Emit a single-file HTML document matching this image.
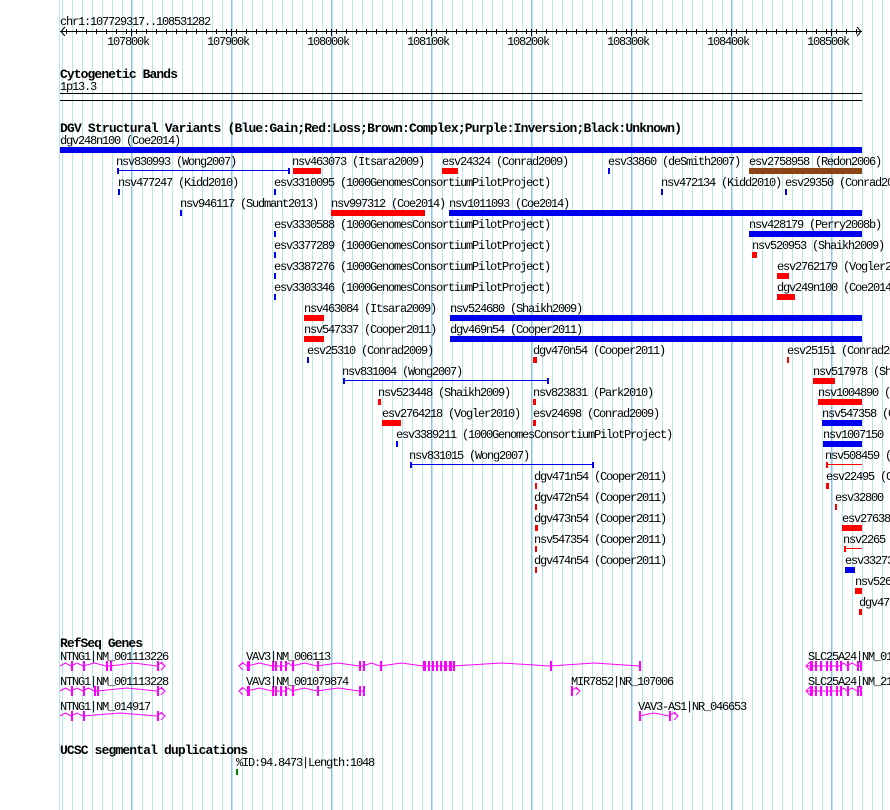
<!DOCTYPE html>
<html><head><meta charset="utf-8"><style>
html,body{margin:0;padding:0;background:#fff;width:890px;height:810px;overflow:hidden}
svg{position:absolute;left:0;top:0}
text{font-family:"Liberation Mono",monospace;font-size:12px;letter-spacing:-1.2px;fill:#000}
.b{font-weight:bold;font-size:13px;letter-spacing:0}
</style></head><body>
<div style="position:absolute;left:60px;top:0;width:830px;height:810px;background:
repeating-linear-gradient(to right,transparent 0 2px,#b2e8f0 2px 3px,transparent 3px 10px);"></div>
<div style="position:absolute;left:59px;top:0;width:1px;height:810px;background:#b2e8f0"></div>
<div style="position:absolute;left:131px;top:0;width:759px;height:810px;background:
repeating-linear-gradient(to right,#8cc6e6 0 1px,transparent 1px 100px);"></div>
<svg id="s" width="890" height="810" xmlns="http://www.w3.org/2000/svg">
<g id="shapes"></g>
<text x="60" y="25">chr1:107729317..108531282</text>
<text x="107" y="45">107800k</text><text x="207" y="45">107900k</text><text x="307" y="45">108000k</text><text x="407" y="45">108100k</text><text x="507" y="45">108200k</text><text x="607" y="45">108300k</text><text x="707" y="45">108400k</text><text x="807" y="45">108500k</text>
<text class="b" x="60" y="78" textLength="118">Cytogenetic Bands</text>
<text x="60" y="90">1p13.3</text>
<text class="b" x="60" y="132" textLength="622">DGV Structural Variants (Blue:Gain;Red:Loss;Brown:Complex;Purple:Inversion;Black:Unknown)</text>
<text x="60" y="144">dgv248n100 (Coe2014)</text>
<text x="116" y="165">nsv830993 (Wong2007)</text>
<text x="292" y="165">nsv463073 (Itsara2009)</text>
<text x="442" y="165">esv24324 (Conrad2009)</text>
<text x="608" y="165">esv33860 (deSmith2007)</text>
<text x="749" y="165">esv2758958 (Redon2006)</text>
<text x="118" y="186">nsv477247 (Kidd2010)</text>
<text x="274" y="186">esv3310095 (1000GenomesConsortiumPilotProject)</text>
<text x="661" y="186">nsv472134 (Kidd2010)</text>
<text x="785" y="186">esv29350 (Conrad2009)</text>
<text x="180" y="207">nsv946117 (Sudmant2013)</text>
<text x="331" y="207">nsv997312 (Coe2014)</text>
<text x="449" y="207">nsv1011093 (Coe2014)</text>
<text x="274" y="228">esv3330588 (1000GenomesConsortiumPilotProject)</text>
<text x="749" y="228">nsv428179 (Perry2008b)</text>
<text x="274" y="249">esv3377289 (1000GenomesConsortiumPilotProject)</text>
<text x="752" y="249">nsv520953 (Shaikh2009)</text>
<text x="274" y="270">esv3387276 (1000GenomesConsortiumPilotProject)</text>
<text x="777" y="270">esv2762179 (Vogler2010)</text>
<text x="274" y="291">esv3303346 (1000GenomesConsortiumPilotProject)</text>
<text x="777" y="291">dgv249n100 (Coe2014)</text>
<text x="304" y="312">nsv463084 (Itsara2009)</text>
<text x="450" y="312">nsv524680 (Shaikh2009)</text>
<text x="304" y="333">nsv547337 (Cooper2011)</text>
<text x="450" y="333">dgv469n54 (Cooper2011)</text>
<text x="307" y="354">esv25310 (Conrad2009)</text>
<text x="533" y="354">dgv470n54 (Cooper2011)</text>
<text x="787" y="354">esv25151 (Conrad2009)</text>
<text x="342" y="375">nsv831004 (Wong2007)</text>
<text x="813" y="375">nsv517978 (Shaikh2009)</text>
<text x="378" y="396">nsv523448 (Shaikh2009)</text>
<text x="533" y="396">nsv823831 (Park2010)</text>
<text x="818" y="396">nsv1004890 (Coe2014)</text>
<text x="382" y="417">esv2764218 (Vogler2010)</text>
<text x="533" y="417">esv24698 (Conrad2009)</text>
<text x="822" y="417">nsv547358 (Cooper2011)</text>
<text x="396" y="438">esv3389211 (1000GenomesConsortiumPilotProject)</text>
<text x="823" y="438">nsv1007150</text>
<text x="409" y="459">nsv831015 (Wong2007)</text>
<text x="825" y="459">nsv508459 (Shaikh2009)</text>
<text x="534" y="480">dgv471n54 (Cooper2011)</text>
<text x="826" y="480">esv22495 (Conrad2009)</text>
<text x="534" y="501">dgv472n54 (Cooper2011)</text>
<text x="835" y="501">esv32800</text>
<text x="534" y="522">dgv473n54 (Cooper2011)</text>
<text x="842" y="522">esv27638</text>
<text x="534" y="543">nsv547354 (Cooper2011)</text>
<text x="843" y="543">nsv2265</text>
<text x="534" y="564">dgv474n54 (Cooper2011)</text>
<text x="845" y="564">esv33273</text>
<text x="855" y="585">nsv526</text>
<text x="859" y="606">dgv475</text>
<text class="b" x="60" y="647" textLength="83">RefSeq Genes</text>
<text x="60" y="660">NTNG1|NM_001113226</text>
<text x="60" y="685">NTNG1|NM_001113228</text>
<text x="60" y="710">NTNG1|NM_014917</text>
<text x="246" y="660">VAV3|NM_006113</text>
<text x="246" y="685">VAV3|NM_001079874</text>
<text x="571" y="685">MIR7852|NR_107006</text>
<text x="638" y="710">VAV3-AS1|NR_046653</text>
<text x="808" y="660">SLC25A24|NM_013386</text>
<text x="808" y="685">SLC25A24|NM_213651</text>
<text class="b" x="60" y="754" textLength="188">UCSC segmental duplications</text>
<text x="236" y="766">%ID:94.8473|Length:1048</text>
</svg>
<script>
var S=document.getElementById('shapes'),NS='http://www.w3.org/2000/svg';
function el(t,a){var e=document.createElementNS(NS,t);for(var k in a)e.setAttribute(k,a[k]);S.appendChild(e);return e}
function R(x,y,w,h,c){el('rect',{x:x,y:y,width:w,height:h,fill:c})}
R(60,31,802,1,'#000');
for(var x=66;x<860;x+=10)R(x,29,1,5,'#000');
for(x=131;x<860;x+=100)R(x,29,1,7,'#000');
el('polyline',{points:'65,27 61,31.5 65,36',fill:'none',stroke:'#000'});
el('polyline',{points:'857,27 861,31.5 857,36',fill:'none',stroke:'#000'});
R(60,93,802,1,'#000');R(60,100,802,1,'#000');
var B='#0000ee',Rd='#ff0000',Br='#8b4513';
R(60,147,802,6,B);
function bar(row,x1,x2,c){R(x1,144+21*row+3,x2-x1,6,c)}
function thin(row,x1,x2,c,both){var y=144+21*row+3;R(x1,y+2,x2-x1,1,c);R(x1,y,2,6,c);if(both!==false)R(x2-2,y,2,6,c)}
var d=[[1,293,321,Rd],[1,442,458,Rd],[1,608,610,B],[1,749,862,Br],
[2,118,120,B],[2,274,276,B],[2,661,663,B],[2,785,787,B],
[3,180,182,B],[3,331,425,Rd],[3,449,862,B],
[4,274,276,B],[4,749,862,B],[5,274,276,B],[5,752,757,Rd],[6,274,276,B],[6,777,789,Rd],[7,274,276,B],[7,777,795,Rd],
[8,304,324,Rd],[8,450,862,B],[9,304,324,Rd],[9,450,862,B],
[10,307,309,B],[10,533,537,Rd],[10,787,789,Rd],[11,813,835,Rd],
[12,378,381,Rd],[12,533,536,Rd],[12,818,862,Rd],[13,382,401,Rd],[13,533,536,Rd],[13,822,862,B],
[14,396,398,B],[14,823,862,B],[16,535,537,Rd],[16,826,829,Rd],[17,535,537,Rd],[17,835,837,Rd],
[18,535,538,Rd],[18,842,862,Rd],[19,535,537,Rd],[20,535,537,Rd],[20,845,855,B],[21,855,862,Rd],[22,859,862,Rd]];
d.forEach(function(a){bar(a[0],a[1],a[2],a[3])});
thin(1,117,290,B);thin(11,343,549,B);thin(15,410,594,B);thin(15,826,862,Rd,false);thin(19,844,862,Rd,false);
var M='#ff00ff';
function gene(y,x1,x2,ex,dir){
 var pts=[];var xs=[x1].concat(ex.map(function(e){return e[0]})).concat([x2]);
 for(var i=0;i<xs.length-1;i++){var a=xs[i],b=xs[i+1];pts.push(a+','+y);if(b-a>6)pts.push(((a+b)/2)+','+(y-3));pts.push(b+','+y)}
 el('polyline',{points:pts.join(' '),fill:'none',stroke:M,'stroke-width':1});
 ex.forEach(function(e){R(e[0],y-5,e[1]||2,10,M)});
 if(dir>0)el('polyline',{points:(x2-4)+','+(y-4)+' '+x2+','+y+' '+(x2-4)+','+(y+4),fill:'none',stroke:M});
 else el('polyline',{points:(x1+4)+','+(y-4)+' '+x1+','+y+' '+(x1+4)+','+(y+4),fill:'none',stroke:M});
}
gene(666,60,165,[[71],[83],[106],[110],[157]],1);
gene(691,60,165,[[71],[83],[94],[97],[157]],1);
gene(716,60,165,[[71],[83],[157]],1);
gene(666,239,640,[[247,3],[272],[275],[280],[285],[292],[317],[359],[363],[380],[423,3],[428,2],[432,2],[436,2],[440,2],[444,3],[449,3],[453,2],[550],[639]],-1);
gene(691,239,364,[[247,3],[272],[275],[280],[285],[292],[317],[359],[363,2]],-1);
gene(691,571,580,[[571]],1);
gene(716,639,678,[[639],[669]],1);
gene(666,806,862,[[810,3],[815,2],[820,2],[826,2],[830,2],[836,2],[840,2],[847],[857],[860]],-1);
gene(691,806,862,[[810,3],[815,2],[820,2],[826,2],[830,2],[836,2],[840,2],[847],[857],[860]],-1);
R(236,769,2,6,'#008000');
</script>
</body></html>
